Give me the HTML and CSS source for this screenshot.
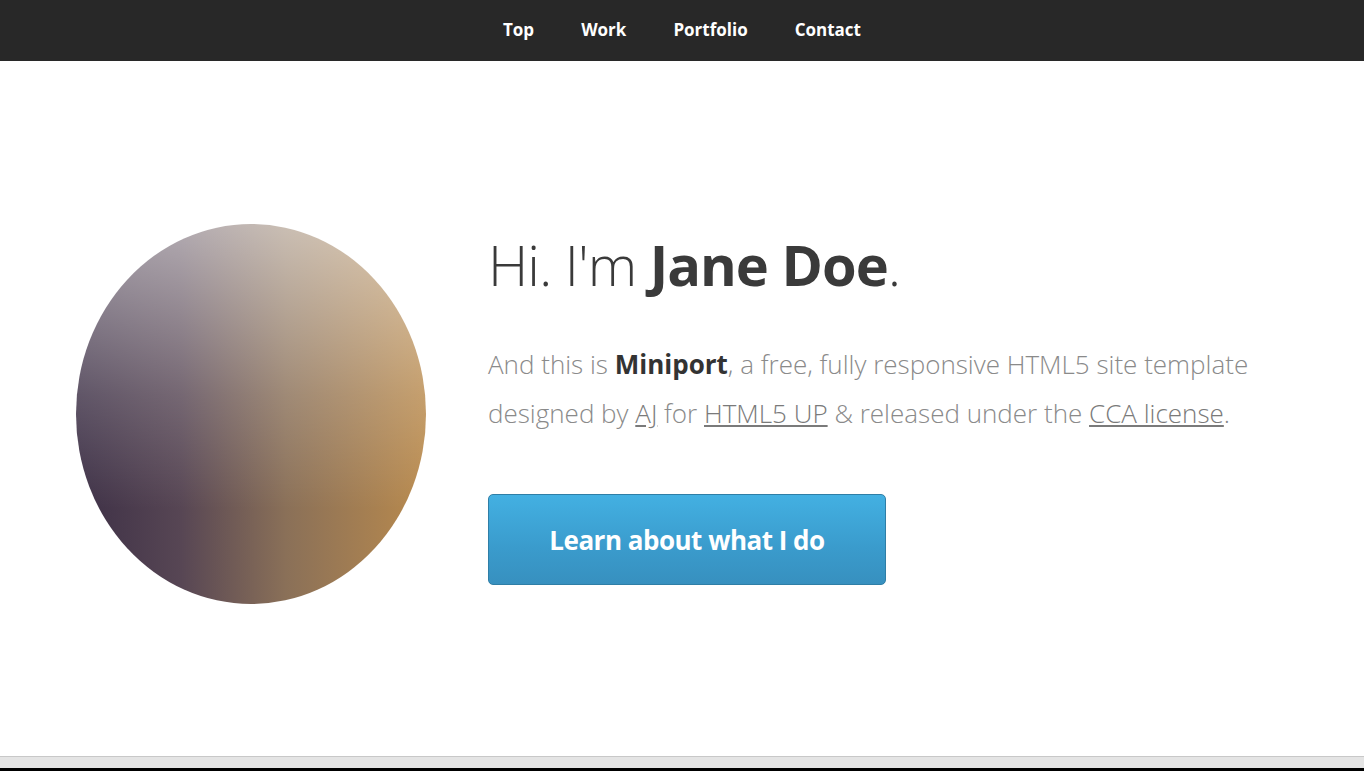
FILE: index.html
```html
<!DOCTYPE html>
<html lang="en">
<head>
<meta charset="utf-8">
<title>Miniport</title>
<link rel="stylesheet" href="styles.css">
</head>
<body>
<nav class="nav">
  <a href="#top">Top</a>
  <a href="#work">Work</a>
  <a href="#portfolio">Portfolio</a>
  <a href="#contact">Contact</a>
</nav>
<main class="main">
  <div class="hero">
    <div class="avatar"></div>
    <div class="intro">
      <h1 class="title">Hi. I'm <strong>Jane Doe</strong>.</h1>
      <p class="lead">And this is <strong>Miniport</strong>, a free, fully responsive HTML5 site template designed by <a href="#">AJ</a> for <a href="#">HTML5 UP</a> &amp; released under the <a href="#">CCA license</a>.</p>
      <a class="button" href="#work">Learn about what I do</a>
    </div>
  </div>
</main>
<div class="scrollbar"></div>
<div class="taskbar"></div>
</body>
</html>
```
FILE: styles.css
```css
html, body {
  margin: 0;
  padding: 0;
}
body {
  height: 771px;
  display: flex;
  flex-direction: column;
  overflow: hidden;
  background: #fff;
  font-family: "Open Sans", "Liberation Sans", sans-serif;
}
.nav {
  height: 61px;
  flex: none;
  box-sizing: border-box;
  padding-bottom: 3px;
  background: #282828;
  display: flex;
  justify-content: center;
  align-items: center;
  gap: 47px;
}
.nav a {
  color: #fff;
  font-weight: 700;
  font-size: 17px;
  text-decoration: none;
}
.main {
  flex: 1;
  padding-top: 163px;
}
.hero {
  display: flex;
  align-items: flex-start;
  padding-left: 76px;
}
.avatar {
  flex: none;
  width: 350px;
  height: 380px;
  border-radius: 50%;
  background:
    linear-gradient(to bottom, rgba(255,255,255,0.55) 0%, rgba(255,255,255,0.18) 45%, rgba(255,255,255,0) 75%),
    linear-gradient(to right, #3d3046 0%, #574654 30%, #8a7058 60%, #b98a4d 100%);
}
.intro {
  margin-left: 62px;
  margin-top: 6px;
  width: 800px;
}
.title {
  margin: 0;
  font-size: 56px;
  font-weight: 300;
  color: #3a3a3a;
  line-height: 68px;
  letter-spacing: -1px;
}
.title strong {
  font-weight: 700;
}
.lead {
  margin: 42px 0 0;
  font-size: 26px;
  font-weight: 300;
  line-height: 49px;
  color: #8a8a8a;
}
.lead strong {
  font-weight: 700;
  color: #333;
}
.lead a {
  color: #7a7a7a;
  text-decoration: underline;
}
.button {
  display: flex;
  justify-content: center;
  align-items: center;
  box-sizing: border-box;
  margin-top: 56px;
  width: 398px;
  height: 91px;
  border: 1px solid #2f7ea6;
  border-radius: 5px;
  background: linear-gradient(to bottom, #43b0e2 0%, #3a9bcc 60%, #3790bf 100%);
  color: #fff;
  font-size: 26px;
  font-weight: 700;
  text-decoration: none;
  letter-spacing: -0.5px;
}
.scrollbar {
  flex: none;
  height: 11px;
  background: #e4e4e4;
  border-top: 1px solid #c8c8c8;
}
.taskbar {
  flex: none;
  height: 3px;
  background: #000;
}
```
